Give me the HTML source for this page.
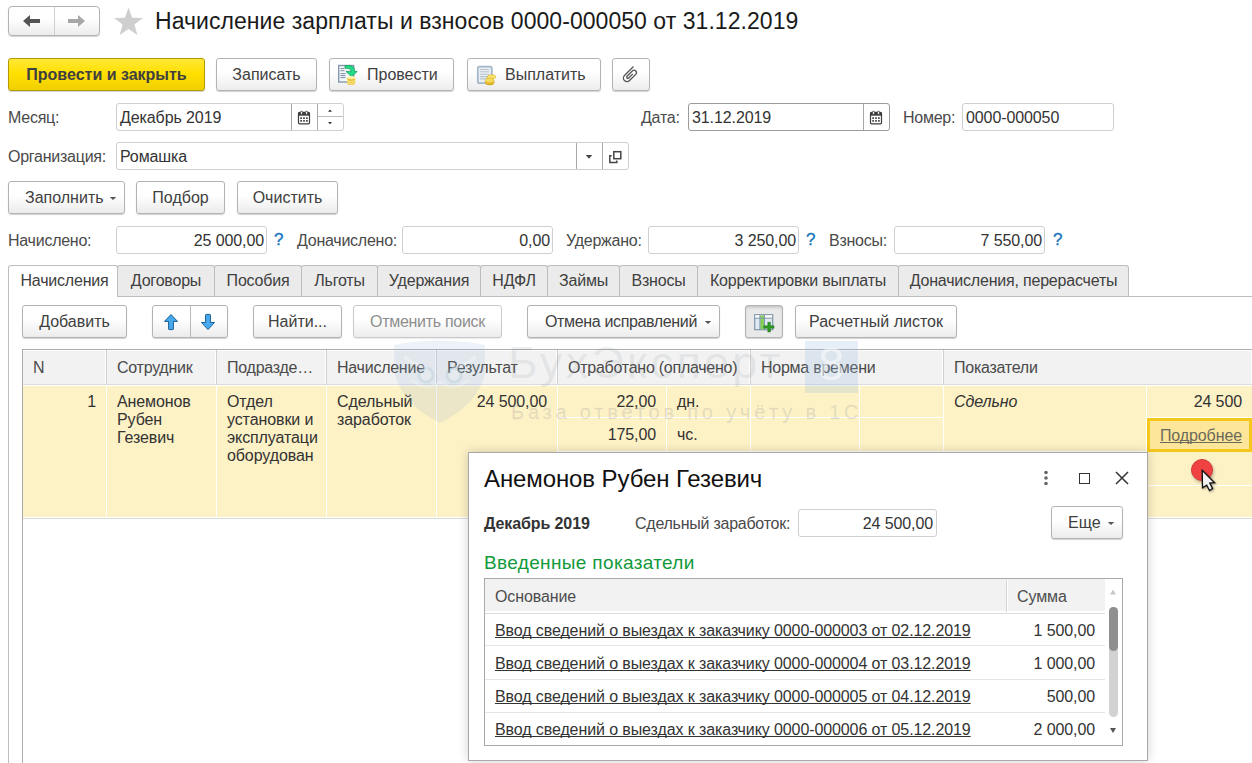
<!DOCTYPE html>
<html><head><meta charset="utf-8">
<style>
*{box-sizing:border-box;margin:0;padding:0}
html,body{width:1252px;height:763px;overflow:hidden;background:#fff;font-family:"Liberation Sans",sans-serif;font-size:16px;color:#333}
.a{position:absolute}
.t{position:absolute;white-space:nowrap;line-height:18px;padding-top:1px;letter-spacing:-0.1px}
.btn{position:absolute;border:1px solid #b3b3b3;border-radius:3px;background:linear-gradient(#ffffff 0%,#ffffff 42%,#ececec 100%);box-shadow:0 1px 1px rgba(0,0,0,.18);color:#404040;text-align:center;white-space:nowrap}
.fld{position:absolute;border:1px solid #cfcfcf;border-radius:3px;background:#fff;color:#333;white-space:nowrap}
.lbl{position:absolute;color:#4a4a4a;white-space:nowrap;line-height:18px;padding-top:1px;letter-spacing:-0.25px}
.q{position:absolute;color:#1776bd;font-size:17px;line-height:18px;-webkit-text-stroke:0.35px #1776bd;margin-left:1px;margin-top:1px}
.tab{position:absolute;top:265px;height:31px;border:1px solid #bdbdbd;border-bottom:none;border-radius:3px 3px 0 0;background:#ebebeb;color:#404040;text-align:center;line-height:29px;white-space:nowrap;letter-spacing:-0.2px}
.hc{position:absolute;top:350px;height:34px;border-right:1px solid #d0d0d0;box-shadow:inset -1px 0 0 #fff,inset 0 1px 0 #fff;color:#4a4a4a;line-height:33px;padding-top:1px;padding-left:10px;white-space:nowrap;letter-spacing:-0.25px}
</style></head><body>

<!-- nav -->
<div class="btn" style="left:8px;top:6px;width:92px;height:30px;border-radius:4px"></div>
<div class="a" style="left:54px;top:7px;width:1px;height:28px;background:#d0d0d0"></div>
<svg class="a" style="left:22px;top:13px" width="20" height="16" viewBox="0 0 20 16"><path d="M1 8 L8 2 L8 6 L18 6 L18 10 L8 10 L8 14 Z" fill="#555"/></svg>
<svg class="a" style="left:66px;top:13px" width="20" height="16" viewBox="0 0 20 16"><path d="M19 8 L12 2 L12 6 L2 6 L2 10 L12 10 L12 14 Z" fill="#a8a8a8"/></svg>
<svg class="a" style="left:113px;top:6px" width="31" height="31" viewBox="0 0 31 31"><path d="M15.5 1.5 L19.1 11.7 L30.0 12.0 L21.4 18.6 L24.4 29.0 L15.5 22.9 L6.6 29.0 L9.6 18.6 L1.0 12.0 L11.9 11.7 Z" fill="#cfcfcf"/></svg>
<div class="t" style="left:155px;top:7px;font-size:23px;line-height:26px;color:#1a1a1a;letter-spacing:0.05px">Начисление зарплаты и взносов 0000-000050 от 31.12.2019</div>

<!-- command bar -->
<div class="btn" style="left:8px;top:58px;width:197px;height:33px;background:linear-gradient(#ffe838,#ffe000 45%,#f0cf00);border-color:#b39a00;color:#404040;font-weight:bold;line-height:31px">Провести и закрыть</div>
<div class="btn" style="left:216px;top:58px;width:101px;height:33px;line-height:31px">Записать</div>
<div class="btn" style="left:329px;top:58px;width:125px;height:33px;line-height:31px;text-align:left;padding-left:37px">Провести</div>
<div class="btn" style="left:467px;top:58px;width:134px;height:33px;line-height:31px;text-align:left;padding-left:37px">Выплатить</div>
<div class="btn" style="left:612px;top:58px;width:38px;height:33px"></div>

<!-- Month row -->
<div class="lbl" style="left:8px;top:108px">Месяц:</div>
<div class="fld" style="left:116px;top:103px;width:228px;height:28px"></div>
<div class="t" style="left:120px;top:108px">Декабрь 2019</div>
<div class="a" style="left:291px;top:104px;width:1px;height:26px;background:#a8a8a8"></div>
<div class="a" style="left:317px;top:104px;width:1px;height:26px;background:#a8a8a8"></div>

<div class="lbl" style="left:641px;top:108px">Дата:</div>
<div class="fld" style="left:688px;top:103px;width:202px;height:28px;border-color:#9c9c9c"></div>
<div class="t" style="left:692px;top:108px">31.12.2019</div>
<div class="a" style="left:863px;top:104px;width:1px;height:26px;background:#a8a8a8"></div>

<div class="lbl" style="left:903px;top:108px">Номер:</div>
<div class="fld" style="left:962px;top:103px;width:152px;height:28px"></div>
<div class="t" style="left:966px;top:108px">0000-000050</div>

<!-- Org row -->
<div class="lbl" style="left:8px;top:147px">Организация:</div>
<div class="fld" style="left:116px;top:142px;width:513px;height:28px"></div>
<div class="t" style="left:120px;top:147px">Ромашка</div>
<div class="a" style="left:576px;top:143px;width:1px;height:26px;background:#a8a8a8"></div>
<div class="a" style="left:602px;top:143px;width:1px;height:26px;background:#a8a8a8"></div>

<!-- Fill buttons -->
<div class="btn" style="left:8px;top:181px;width:117px;height:33px;line-height:31px;text-align:left;padding-left:16px">Заполнить</div>
<div class="btn" style="left:136px;top:181px;width:89px;height:33px;line-height:31px">Подбор</div>
<div class="btn" style="left:237px;top:181px;width:101px;height:33px;line-height:31px">Очистить</div>

<!-- totals -->
<div class="lbl" style="left:8px;top:231px">Начислено:</div>
<div class="fld" style="left:116px;top:226px;width:151px;height:28px"></div>
<div class="t" style="left:116px;top:231px;width:148px;text-align:right">25 000,00</div>
<div class="q" style="left:273px;top:230px">?</div>
<div class="lbl" style="left:297px;top:231px">Доначислено:</div>
<div class="fld" style="left:402px;top:226px;width:151px;height:28px"></div>
<div class="t" style="left:402px;top:231px;width:148px;text-align:right">0,00</div>
<div class="lbl" style="left:566px;top:231px">Удержано:</div>
<div class="fld" style="left:648px;top:226px;width:151px;height:28px"></div>
<div class="t" style="left:648px;top:231px;width:148px;text-align:right">3 250,00</div>
<div class="q" style="left:805px;top:230px">?</div>
<div class="lbl" style="left:829px;top:231px">Взносы:</div>
<div class="fld" style="left:894px;top:226px;width:151px;height:28px"></div>
<div class="t" style="left:894px;top:231px;width:148px;text-align:right">7 550,00</div>
<div class="q" style="left:1052px;top:230px">?</div>

<!-- tabs -->
<div class="a" style="left:8px;top:296px;width:1244px;height:1px;background:#bdbdbd"></div>
<div class="a" style="left:8px;top:296px;width:1px;height:467px;background:#bdbdbd"></div>
<div class="tab" style="left:8px;width:110px;background:#fff;height:32px;padding-left:3px">Начисления</div>
<div class="tab" style="left:117px;width:98px">Договоры</div>
<div class="tab" style="left:214px;width:88px">Пособия</div>
<div class="tab" style="left:301px;width:77px">Льготы</div>
<div class="tab" style="left:377px;width:104px">Удержания</div>
<div class="tab" style="left:480px;width:68px">НДФЛ</div>
<div class="tab" style="left:547px;width:73px">Займы</div>
<div class="tab" style="left:619px;width:79px">Взносы</div>
<div class="tab" style="left:697px;width:202px">Корректировки выплаты</div>
<div class="tab" style="left:898px;width:231px">Доначисления, перерасчеты</div>

<!-- toolbar -->
<div class="btn" style="left:22px;top:305px;width:105px;height:33px;line-height:31px">Добавить</div>
<div class="btn" style="left:152px;top:305px;width:76px;height:33px"></div>
<div class="btn" style="left:253px;top:305px;width:89px;height:33px;line-height:31px">Найти...</div>
<div class="btn" style="left:353px;top:305px;width:149px;height:33px;line-height:31px;color:#8e8e8e;border-color:#c9c9c9;box-shadow:0 1px 1px rgba(0,0,0,.08);letter-spacing:-0.3px">Отменить поиск</div>
<div class="btn" style="left:527px;top:305px;width:193px;height:33px;line-height:31px;text-align:left;padding-left:17px;letter-spacing:-0.35px">Отмена исправлений</div>
<div class="btn" style="left:745px;top:305px;width:38px;height:33px;background:#e9e9e9;box-shadow:inset 0 2px 2px rgba(0,0,0,0.13),0 1px 1px rgba(0,0,0,.18)"></div>
<div class="btn" style="left:795px;top:305px;width:162px;height:33px;line-height:31px">Расчетный листок</div>

<!-- table -->
<div class="a" style="left:22px;top:349px;width:1230px;height:430px;border:1px solid #acacac;border-right:none"></div>
<div class="a" style="left:23px;top:350px;width:1229px;height:34px;background:#f2f2f2"></div>
<div class="a" style="left:23px;top:384px;width:1229px;height:1px;background:#dcdcdc"></div>
<div class="a" style="left:23px;top:386px;width:1229px;height:131px;background:#fdf1c6"></div>
<div class="a" style="left:23px;top:518px;width:1229px;height:1px;background:#dadada"></div>


<!-- header cells -->
<div class="a" style="left:23px;top:350px;width:1229px;height:1px;background:#fff"></div>
<div class="hc" style="left:23px;width:84px">N</div>
<div class="hc" style="left:107px;width:110px">Сотрудник</div>
<div class="hc" style="left:217px;width:110px">Подразде…</div>
<div class="hc" style="left:327px;width:110px">Начисление</div>
<div class="hc" style="left:437px;width:121px">Результат</div>
<div class="hc" style="left:558px;width:193px">Отработано (оплачено)</div>
<div class="hc" style="left:751px;width:193px">Норма времени</div>
<div class="hc" style="left:944px;width:308px;border-right:none">Показатели</div>
<!-- row dividers (white) -->
<div class="a" style="left:106px;top:385px;width:1px;height:132px;background:#fff"></div>
<div class="a" style="left:216px;top:385px;width:1px;height:132px;background:#fff"></div>
<div class="a" style="left:326px;top:385px;width:1px;height:132px;background:#fff"></div>
<div class="a" style="left:436px;top:385px;width:1px;height:132px;background:#fff"></div>
<div class="a" style="left:557px;top:385px;width:1px;height:132px;background:#fff"></div>
<div class="a" style="left:666px;top:385px;width:1px;height:132px;background:#fff"></div>
<div class="a" style="left:750px;top:385px;width:1px;height:132px;background:#fff"></div>
<div class="a" style="left:859px;top:385px;width:1px;height:132px;background:#fff"></div>
<div class="a" style="left:943px;top:385px;width:1px;height:132px;background:#fff"></div>
<div class="a" style="left:1146px;top:385px;width:1px;height:132px;background:#fff"></div>
<div class="a" style="left:557px;top:417px;width:386px;height:1px;background:#fff"></div>
<div class="a" style="left:557px;top:451px;width:386px;height:1px;background:#fff"></div>
<div class="a" style="left:557px;top:485px;width:386px;height:1px;background:#fff"></div>
<div class="a" style="left:943px;top:451px;width:309px;height:1px;background:#fff"></div>
<div class="a" style="left:1146px;top:417px;width:106px;height:1px;background:#fff"></div>
<div class="a" style="left:1146px;top:485px;width:106px;height:1px;background:#fff"></div>
<!-- row text -->
<div class="t" style="left:23px;top:392px;width:73px;text-align:right">1</div>
<div class="t" style="left:117px;top:392px;white-space:normal;width:95px">Анемонов<br>Рубен<br>Гезевич</div>
<div class="t" style="left:227px;top:392px">Отдел<br>установки и<br>эксплуатаци<br>оборудован</div>
<div class="t" style="left:337px;top:392px">Сдельный<br>заработок</div>
<div class="t" style="left:437px;top:392px;width:110px;text-align:right">24 500,00</div>
<div class="t" style="left:558px;top:392px;width:98px;text-align:right">22,00</div>
<div class="t" style="left:677px;top:392px">дн.</div>
<div class="t" style="left:558px;top:425px;width:98px;text-align:right">175,00</div>
<div class="t" style="left:677px;top:425px">чс.</div>
<div class="t" style="left:954px;top:392px;font-style:italic">Сдельно</div>
<div class="t" style="left:1147px;top:392px;width:95px;text-align:right">24 500</div>
<div class="a" style="left:1147px;top:418px;width:105px;height:34px;border:3px solid #f6c71b;background:#fde69a"></div>
<div class="t" style="left:1147px;top:426px;width:95px;text-align:right;color:#6a6a5a;text-decoration:underline;text-decoration-skip-ink:none">Подробнее</div>



<!-- ICONS -->
<!-- Provesti icon -->
<svg class="a" style="left:336px;top:62px" width="24" height="24" viewBox="0 0 24 24">
<rect x="2.7" y="3.5" width="15" height="16.5" fill="#f4f7fa" stroke="#8797ad" stroke-width="1.4"/>
<path d="M4.5 6.5h4M4.5 8.7h4M4.5 11.6h5M4.5 13.6h5M4.5 15.6h5" stroke="#7d8ea6" stroke-width="1"/>
<path d="M9 3.6 Q14.8 2.6 17.8 5.6 Q18.5 7.2 18.4 9.4 L21.3 9.4 L15.6 14.6 L9.9 9.4 L15.2 9.4 Q15.2 7.6 13.6 6.9 Q11.6 6 9 6.2 Z" fill="#22dd88" stroke="#13a05a" stroke-width="0.8" stroke-linejoin="round"/>
<path d="M11.2 15.6 v5.3 a4 1.9 0 0 0 8 0 v-5.3 z" fill="#e8c030"/>
<ellipse cx="15.2" cy="15.6" rx="4" ry="1.7" fill="#fff3b0"/>
<path d="M11.2 17.7 a4 1.9 0 0 0 8 0 M11.2 19.6 a4 1.9 0 0 0 8 0" stroke="#fff2a0" stroke-width="0.9" fill="none"/>
</svg>
<!-- Vyplatit icon -->
<svg class="a" style="left:474px;top:62px" width="24" height="24" viewBox="0 0 24 24">
<rect x="3.8" y="4.7" width="14" height="16.5" rx="1.5" fill="#e9eff4" stroke="#a4b8c8" stroke-width="1.8"/>
<path d="M6 7.5h9M6 9.8h9M6 12.3h9M6 14.6h8M6 16.9h8" stroke="#b8c4cc" stroke-width="1.1"/>
<ellipse cx="17.5" cy="14.9" rx="4.2" ry="2.1" fill="#f7e26a" stroke="#d8a820" stroke-width="0.6"/>
<path d="M11.4 18.3 a4.3 2 0 0 1 8.6 0 v2.6 a4.3 2 0 0 1 -8.6 0z" fill="#e5bb2e" stroke="#c99415" stroke-width="0.6"/>
<ellipse cx="15.7" cy="18.3" rx="4.3" ry="2" fill="#f5dc5c"/>
</svg>
<!-- paperclip -->
<svg class="a" style="left:618px;top:62.5px" width="24" height="24" viewBox="-12 -12 24 24">
<g transform="rotate(45)"><path d="M-3.6 -8.5 L-3.6 4.2 A3.6 3.6 0 0 0 3.6 4.2 L3.6 -4.5 A2.4 2.4 0 0 0 -1.2 -4.5 L-1.2 3 A1.2 1.2 0 0 0 1.2 3 L1.2 -2.8" fill="none" stroke="#555" stroke-width="1.3"/></g>
</svg>
<!-- calendar month -->
<svg class="a" style="left:297px;top:110px" width="14" height="15" viewBox="0 0 14 15">
<path d="M1.5 3.5 Q1.5 2.3 2.7 2.3 L11.3 2.3 Q12.5 2.3 12.5 3.5 L12.5 12.5 Q12.5 13.8 11.3 13.8 L2.7 13.8 Q1.5 13.8 1.5 12.5 Z" fill="#fff" stroke="#3c3c3c" stroke-width="1.2"/>
<rect x="1.5" y="2.3" width="11" height="3.4" fill="#3c3c3c"/>
<rect x="3.6" y="1.2" width="1.9" height="3.2" rx="0.95" fill="#fff" stroke="#3c3c3c" stroke-width="0.8"/>
<rect x="8.6" y="1.2" width="1.9" height="3.2" rx="0.95" fill="#fff" stroke="#3c3c3c" stroke-width="0.8"/>
<path d="M3.3 7.3h1.6v1.6h-1.6zM6.2 7.3h1.6v1.6h-1.6zM9.1 7.3h1.6v1.6h-1.6zM3.3 10.1h1.6v1.6h-1.6zM6.2 10.1h1.6v1.6h-1.6zM9.1 10.1h1.6v1.6h-1.6z" fill="#3c3c3c"/>
</svg>
<!-- calendar date -->
<svg class="a" style="left:869px;top:110px" width="14" height="15" viewBox="0 0 14 15">
<path d="M1.5 3.5 Q1.5 2.3 2.7 2.3 L11.3 2.3 Q12.5 2.3 12.5 3.5 L12.5 12.5 Q12.5 13.8 11.3 13.8 L2.7 13.8 Q1.5 13.8 1.5 12.5 Z" fill="#fff" stroke="#3c3c3c" stroke-width="1.2"/>
<rect x="1.5" y="2.3" width="11" height="3.4" fill="#3c3c3c"/>
<rect x="3.6" y="1.2" width="1.9" height="3.2" rx="0.95" fill="#fff" stroke="#3c3c3c" stroke-width="0.8"/>
<rect x="8.6" y="1.2" width="1.9" height="3.2" rx="0.95" fill="#fff" stroke="#3c3c3c" stroke-width="0.8"/>
<path d="M3.3 7.3h1.6v1.6h-1.6zM6.2 7.3h1.6v1.6h-1.6zM9.1 7.3h1.6v1.6h-1.6zM3.3 10.1h1.6v1.6h-1.6zM6.2 10.1h1.6v1.6h-1.6zM9.1 10.1h1.6v1.6h-1.6z" fill="#3c3c3c"/>
</svg>
<!-- spinner -->
<div class="a" style="left:318px;top:116px;width:25px;height:1px;background:#bdbdbd"></div>
<svg class="a" style="left:326px;top:108px" width="8" height="18" viewBox="0 0 8 18"><path d="M2 3.8 L6 3.8 L4 1.6 Z M2 14 L6 14 L4 16.3 Z" fill="#333"/></svg>
<!-- org dropdown + open -->
<svg class="a" style="left:584px;top:153px" width="10" height="8" viewBox="0 0 10 8"><path d="M1.8 2 L8.2 2 L5 5.8 Z" fill="#444"/></svg>
<svg class="a" style="left:606px;top:148px" width="18" height="18" viewBox="0 0 18 18"><rect x="7.8" y="3.7" width="7" height="7" fill="none" stroke="#444" stroke-width="1.5"/><path d="M5.6 7.7 L3.8 7.7 L3.8 14.6 L10.8 14.6 L10.8 12.6" fill="none" stroke="#444" stroke-width="1.5"/></svg>
<!-- dropdown arrows in buttons -->
<svg class="a" style="left:108px;top:195px" width="10" height="8" viewBox="0 0 10 8"><path d="M1.8 2 L8.2 2 L5 5 Z" fill="#555"/></svg>
<svg class="a" style="left:703px;top:319px" width="10" height="8" viewBox="0 0 10 8"><path d="M1.8 2 L8.2 2 L5 5 Z" fill="#555"/></svg>
<!-- arrows up/down -->
<div class="a" style="left:190px;top:306px;width:1px;height:31px;background:#b9b9b9"></div>
<svg class="a" style="left:162px;top:312px" width="18" height="20" viewBox="0 0 18 20"><path d="M9 2.5 L15.5 9.4 L11.4 9.4 L11.4 17 Q11.4 17.6 10.8 17.6 L7.2 17.6 Q6.6 17.6 6.6 17 L6.6 9.4 L2.5 9.4 Z" fill="#48a9ec" stroke="#195e94" stroke-width="1" stroke-linejoin="round"/></svg>
<svg class="a" style="left:199px;top:312px" width="18" height="20" viewBox="0 0 18 20"><path d="M9 17.6 L15.5 10.5 L11.4 10.5 L11.4 3 Q11.4 2.4 10.8 2.4 L7.2 2.4 Q6.6 2.4 6.6 3 L6.6 10.5 L2.5 10.5 Z" fill="#48a9ec" stroke="#195e94" stroke-width="1" stroke-linejoin="round"/></svg>
<!-- table icon -->
<svg class="a" style="left:752px;top:312px" width="26" height="22" viewBox="0 0 26 22">
<rect x="2.7" y="2.7" width="18" height="15" fill="#dfeaf3" stroke="#7f98ab" stroke-width="1.2"/>
<rect x="3.3" y="3.3" width="16.8" height="2.6" fill="#fff"/>
<rect x="8.2" y="3.3" width="4" height="14" fill="#86cf5a"/>
<path d="M7.9 2.7 V17.7 M12.5 2.7 V17.7 M2.7 6.2 H20.7" stroke="#7f98ab" stroke-width="1"/>
<path d="M15.8 10.2 h2.6 v3.6 h3.6 v2.4 h-3.6 v3.7 h-2.6 v-3.7 h-4 v-2.4 h4 z" fill="#2f9a22" stroke="#1f6e14" stroke-width="0.5"/>
</svg>

<!-- watermark -->
<svg class="a" style="left:392px;top:338px" width="96" height="88" viewBox="0 0 96 88">
<path d="M2 7 Q47 -2 93 7 L93 36 Q86 66 48 85 Q10 66 3 36 Z" fill="rgba(140,180,205,0.17)"/>
<path d="M12 19 Q24 28 36 30 M84 19 Q72 28 60 30" stroke="rgba(255,255,255,0.35)" stroke-width="3" fill="none"/>
<circle cx="34" cy="37" r="7" fill="rgba(255,255,255,0.12)" stroke="rgba(110,160,195,0.16)" stroke-width="3"/>
<circle cx="62" cy="37" r="7" fill="rgba(255,255,255,0.12)" stroke="rgba(110,160,195,0.16)" stroke-width="3"/>
<path d="M20 42 Q34 55 48 44 Q62 55 76 42" stroke="rgba(255,255,255,0.25)" stroke-width="3" fill="none"/>
</svg>
<div class="a" style="left:508px;top:336px;font-size:45px;line-height:54px;letter-spacing:3.3px;white-space:nowrap;color:rgba(120,130,140,0.14)">БухЭксперт</div>
<div class="a" style="left:805px;top:341px;width:53px;height:52px;background:rgba(150,190,220,0.24)"></div>
<div class="a" style="left:818px;top:337px;font-size:47px;line-height:54px;white-space:nowrap;color:rgba(255,255,255,0.55)">8</div>
<div class="a" style="left:511px;top:401px;font-size:20px;line-height:22px;letter-spacing:3.8px;white-space:nowrap;color:rgba(120,130,140,0.19);-webkit-text-stroke:0.3px rgba(120,130,140,0.12)">База ответов по учёту в 1С</div>

<!-- cursor -->
<div class="a" style="left:1191px;top:459px;width:22px;height:22px;border-radius:50%;background:#f14242;border:1px solid #d23a3a;box-shadow:1px 2px 3px rgba(0,0,0,.25)"></div>
<svg class="a" style="left:1199px;top:467px" width="20" height="28" viewBox="0 0 20 28"><path d="M3.2 3.3 L3.5 20.8 L7.7 18.2 L10.5 23.6 L13.6 21.6 L10.8 16 L15.6 15.7 Z" fill="#f2f2f2" stroke="#111" stroke-width="1.3" stroke-linejoin="miter" style="filter:drop-shadow(1px 1.5px 1px rgba(0,0,0,.35))"/></svg>

<!-- popup -->
<div class="a" style="left:468px;top:452px;width:680px;height:309px;background:#fff;border:1px solid #a9a9a9;box-shadow:0 0 10px rgba(0,0,0,0.18)"></div>
<div class="t" style="left:484px;top:464px;font-size:24px;line-height:28px;color:#111">Анемонов Рубен Гезевич</div>
<svg class="a" style="left:1040px;top:469px" width="12" height="18" viewBox="0 0 12 18"><circle cx="6" cy="3.5" r="1.8" fill="#666"/><circle cx="6" cy="9" r="1.8" fill="#666"/><circle cx="6" cy="14.5" r="1.8" fill="#666"/></svg>
<div class="a" style="left:1079px;top:473px;width:11px;height:11px;border:1.5px solid #333"></div>
<svg class="a" style="left:1114px;top:470px" width="16" height="16" viewBox="0 0 16 16"><path d="M2 2 L14 14 M14 2 L2 14" stroke="#333" stroke-width="1.5"/></svg>

<div class="t" style="left:484px;top:514px;font-weight:bold;color:#333">Декабрь 2019</div>
<div class="lbl" style="left:635px;top:514px">Сдельный заработок:</div>
<div class="fld" style="left:798px;top:509px;width:139px;height:28px"></div>
<div class="t" style="left:798px;top:514px;width:135px;text-align:right">24 500,00</div>
<div class="btn" style="left:1051px;top:506px;width:72px;height:33px;line-height:31px;text-align:left;padding-left:16px">Еще</div>
<svg class="a" style="left:1106px;top:520px" width="10" height="8" viewBox="0 0 10 8"><path d="M1.8 2 L8.2 2 L5 5 Z" fill="#555"/></svg>


<div class="t" style="left:484px;top:551px;font-size:19px;line-height:22px;letter-spacing:0.35px;color:#119a3b">Введенные показатели</div>

<div class="a" style="left:484px;top:578px;width:639px;height:168px;border:1px solid #a9a9a9"></div>
<div class="a" style="left:485px;top:579px;width:620px;height:35px;background:#f2f2f2;border-bottom:1px solid #dcdcdc;box-shadow:inset 0 -2px 0 #fff"></div>
<div class="a" style="left:1006px;top:580px;width:1px;height:32px;background:#d4d4d4;box-shadow:1px 0 0 #fff"></div>
<div class="t" style="left:495px;top:587px;color:#4d4d4d">Основание</div>
<div class="t" style="left:1017px;top:587px;color:#4d4d4d">Сумма</div>
<div class="a" style="left:485px;top:645px;width:620px;height:1px;background:#e6e6e6"></div>
<div class="a" style="left:485px;top:679px;width:620px;height:1px;background:#e6e6e6"></div>
<div class="a" style="left:485px;top:712px;width:620px;height:1px;background:#e6e6e6"></div>
<div class="t" style="left:495px;top:621px;text-decoration:underline;text-decoration-skip-ink:none">Ввод сведений о выездах к заказчику 0000-000003 от 02.12.2019</div>
<div class="t" style="left:495px;top:654px;text-decoration:underline;text-decoration-skip-ink:none">Ввод сведений о выездах к заказчику 0000-000004 от 03.12.2019</div>
<div class="t" style="left:495px;top:687px;text-decoration:underline;text-decoration-skip-ink:none">Ввод сведений о выездах к заказчику 0000-000005 от 04.12.2019</div>
<div class="t" style="left:495px;top:720px;text-decoration:underline;text-decoration-skip-ink:none">Ввод сведений о выездах к заказчику 0000-000006 от 05.12.2019</div>
<div class="t" style="left:1000px;top:621px;width:95px;text-align:right">1 500,00</div>
<div class="t" style="left:1000px;top:654px;width:95px;text-align:right">1 000,00</div>
<div class="t" style="left:1000px;top:687px;width:95px;text-align:right">500,00</div>
<div class="t" style="left:1000px;top:720px;width:95px;text-align:right">2 000,00</div>
<!-- scrollbar -->
<div class="a" style="left:1109px;top:607px;width:9px;height:110px;border-radius:5px;background:#d2d2d2"></div>
<div class="a" style="left:1109px;top:607px;width:9px;height:44px;border-radius:5px;background:#8f8f8f"></div>
<svg class="a" style="left:1108px;top:588px" width="10" height="8" viewBox="0 0 10 8"><path d="M5 1.5 L8 6.5 L2 6.5 Z" fill="#c8c8c8"/></svg>
<svg class="a" style="left:1108px;top:726px" width="10" height="8" viewBox="0 0 10 8"><path d="M2 2 L8 2 L5 7 Z" fill="#555"/></svg>

</body></html>
